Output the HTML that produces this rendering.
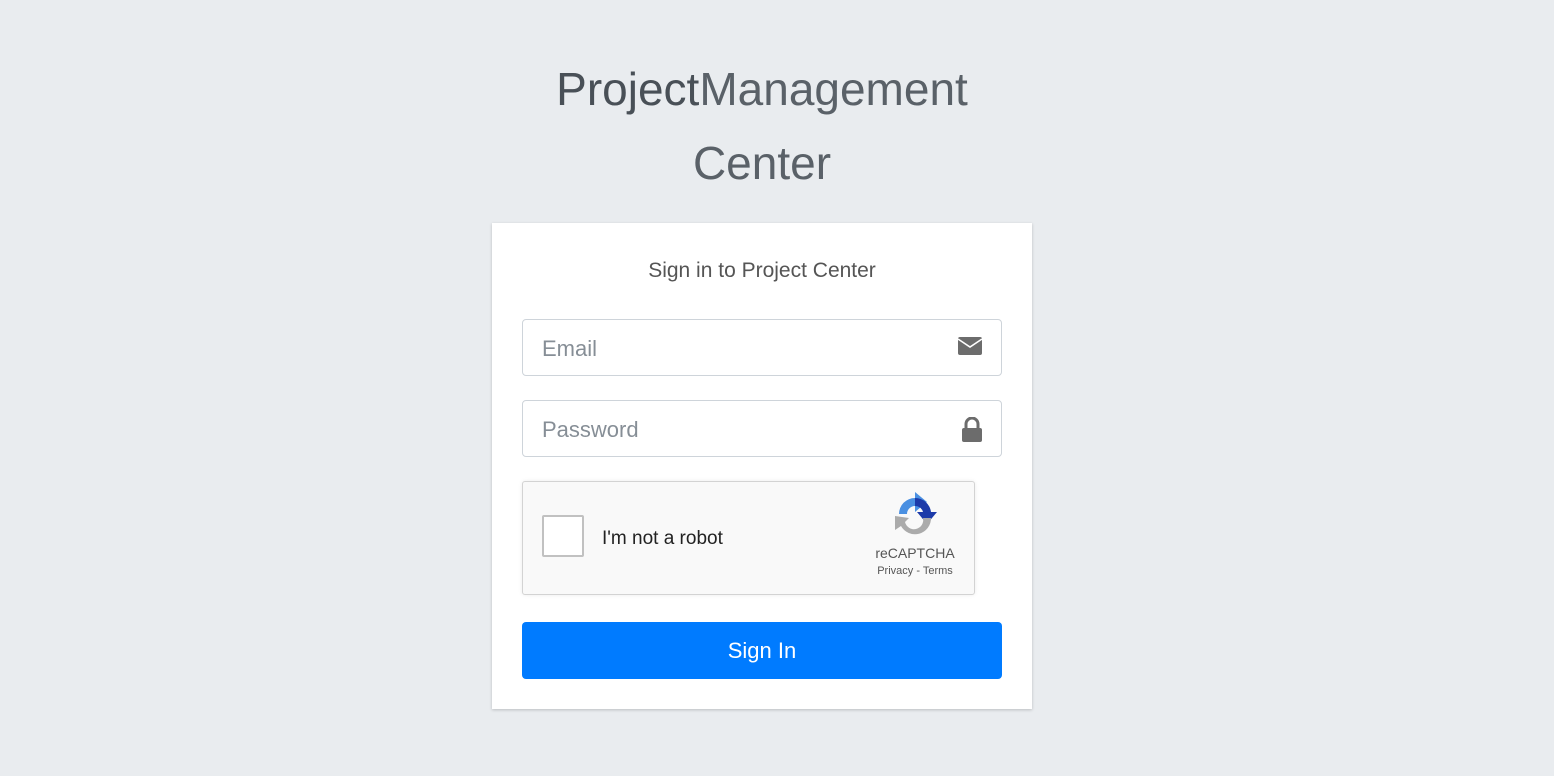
<!DOCTYPE html>
<html><head><style>
body{margin:0;background:#e9ecef;font-family:"Liberation Sans",sans-serif;width:1554px;height:776px;overflow:hidden;position:relative}
.title{position:absolute;left:0;width:1524px;text-align:center;color:#5a6168;font-size:46px;font-weight:300;line-height:74px;top:52px}
.title b{font-weight:400;color:#495057}
.card{position:absolute;left:492px;top:223px;width:540px;height:486px;background:#fff;box-shadow:0 1px 3px rgba(0,0,0,.2)}
.h{position:absolute;top:36px;width:540px;text-align:center;font-size:21px;color:#555}
.inp{position:absolute;left:30px;width:478px;height:55px;border:1px solid #ced4da;border-radius:4px;}
.inp span{position:absolute;left:19px;top:16px;font-size:22px;color:#868e96}
.inp svg{position:absolute;right:18px;top:16px}
.cap{position:absolute;left:30px;top:258px;width:451px;height:112px;background:#f9f9f9;border:1px solid #d3d3d3;border-radius:3px;box-shadow:0 0 4px rgba(0,0,0,.08)}
.cb{position:absolute;left:19px;top:33px;border:2px solid #c1c1c1;border-radius:2px;background:#fff;box-sizing:border-box;width:42px;height:42px}
.btn{position:absolute;left:30px;top:399px;width:480px;height:57px;background:#007bff;border-radius:4px;color:#fff;font-size:22px;text-align:center;line-height:57px}
</style></head><body>
<div class="title"><b>Project</b>Management<br>Center</div>
<div class="card">
<div class="h">Sign in to Project Center</div>
<div class="inp" style="top:96px"><span>Email</span>
<svg width="26" height="20" viewBox="0 0 26 20"><rect x="1" y="1" width="24" height="18" rx="2" fill="#6c6c6c"/><path d="M1 3 L13 11 L25 3" stroke="#fff" stroke-width="1.6" fill="none"/></svg></div>
<div class="inp" style="top:177px"><span>Password</span>
<svg width="22" height="26" viewBox="0 0 22 26"><path d="M5 11 V7 a6 6 0 0 1 12 0 V11" stroke="#6c6c6c" stroke-width="3" fill="none"/><rect x="1" y="11" width="20" height="14" rx="2" fill="#6c6c6c"/></svg></div>
<div class="cap"><div class="cb"></div>
<div style="position:absolute;left:79px;top:46px;font-size:19px;color:#222">I'm not a robot</div>
<svg style="position:absolute;left:368px;top:10px" width="48" height="48" viewBox="0 0 48 48">
<path d="M8 22 A16 16 0 0 1 24 6 V0 L36 10 L24 20 V14 A8 8 0 0 0 16 22Z" fill="#4a90e2"/>
<path d="M24 6 A16 16 0 0 1 40 20 H46 L36 32 L26 20 H32 A8 8 0 0 0 24 14Z" fill="#1c3aa9"/>
<path d="M40 26 A16 16 0 0 1 10 34 L4 38 L4 24 L18 26 L14 30 A8 8 0 0 0 32 26Z" fill="#ababab"/>
</svg>
<div style="position:absolute;left:340px;top:63px;width:104px;text-align:center;font-size:14px;color:#555">reCAPTCHA</div>
<div style="position:absolute;left:340px;top:83px;width:104px;text-align:center;font-size:11px;color:#555">Privacy - Terms</div>
</div>
<div class="btn">Sign In</div>
</div>
</body></html>
